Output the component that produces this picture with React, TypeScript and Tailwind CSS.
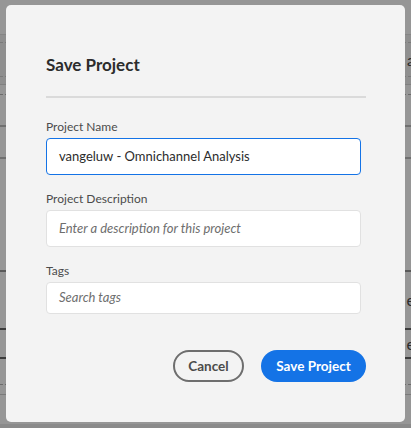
import React from "react";

const font = { fontFamily: "Lato, 'Noto Sans', sans-serif" };

function Field({ label, placeholder, value, focused, h }: { label: string; placeholder?: string; value?: string; focused?: boolean; h: string }) {
  return (
    <div className="flex flex-col">
      <label className="text-[12px] leading-[14px] text-[#4b4b4b]">{label}</label>
      <div
        className={`mt-[4px] w-[315px] ${h} rounded-[4px] bg-white flex items-center px-[12px] ${
          focused ? "border border-[#1473e6]" : "border border-[#e1e1e1]"
        }`}
      >
        {value ? (
          <span className="text-[13px] text-[#2c2c2c]">{value}</span>
        ) : (
          <span className="text-[13px] italic text-[#6e6e6e]">{placeholder}</span>
        )}
      </div>
    </div>
  );
}

function Backdrop() {
  return (
    <div className="flex flex-col h-full text-[16px] text-[#2c2c2c]">
      <div className="h-[35px] shrink-0 border-b border-[#858585]" />
      <div className="h-[8px] shrink-0 bg-[#8f8f8f] border-b border-dashed border-[#7a7a7a]" />
      <div className="h-[34px] shrink-0 bg-[#8f8f8f] border-b border-dashed border-[#7a7a7a] flex items-center justify-end">
        <span className="-mr-[4px]">a</span>
      </div>
      <div className="h-[8px] shrink-0 bg-[#8f8f8f] border-b border-[#808080]" />
      <div className="h-[10px] shrink-0 border-b border-dashed border-[#6a6a6a]" />
      <div className="h-[32px] shrink-0 border-b-2 border-[#707070]" />
      <div className="h-[32px] shrink-0 border-b-2 border-[#707070]" />
      <div className="h-[113px] shrink-0 border-b-2 border-[#5a5a5a]" />
      <div className="h-[58px] shrink-0 border-b-2 border-[#3c3c3c] flex items-center justify-end">
        <span className="-mr-[4px]">e</span>
      </div>
      <div className="h-[29px] shrink-0 border-b-2 border-[#3c3c3c] flex items-center justify-end">
        <span className="-mr-[4px]">e</span>
      </div>
      <div className="h-[26px] shrink-0 border-b border-dashed border-[#6a6a6a]" />
      <div className="h-[10px] shrink-0 border-b border-[#7a7a7a]" />
      <div className="flex-1" />
      <div className="h-[4px] shrink-0 bg-[#8a8a8a]" />
    </div>
  );
}

export default function App() {
  return (
    <div className="relative w-[411px] h-[428px] overflow-hidden bg-[#969696]" style={font}>
      <Backdrop />

      {/* dialog overlay */}
      <div className="absolute left-[6px] top-[5px] w-[399px] h-[417px] rounded-[5px] bg-[#f3f3f3] px-[40px] pt-[50px]">
        <h2 className="text-[17px] leading-[20px] font-bold text-[#2c2c2c]">Save Project</h2>
        <div className="mt-[21px] w-[320px] h-[2px] bg-[#dadada]" />
        <div className="mt-[22px] flex flex-col gap-[17px]">
          <Field label="Project Name" value="vangeluw - Omnichannel Analysis" focused h="h-[37px]" />
          <Field label="Project Description" placeholder="Enter a description for this project" h="h-[37px]" />
          <Field label="Tags" placeholder="Search tags" h="h-[32px]" />
        </div>
        <div className="mt-[36px] w-[320px] flex justify-end gap-[17px]">
          <button className="h-[32px] w-[71px] rounded-full border-2 border-[#6e6e6e] text-[13.5px] font-bold text-[#4b4b4b]">
            Cancel
          </button>
          <button className="h-[32px] w-[105px] rounded-full bg-[#1473e6] text-[13.5px] font-bold text-white">
            Save Project
          </button>
        </div>
      </div>
    </div>
  );
}
